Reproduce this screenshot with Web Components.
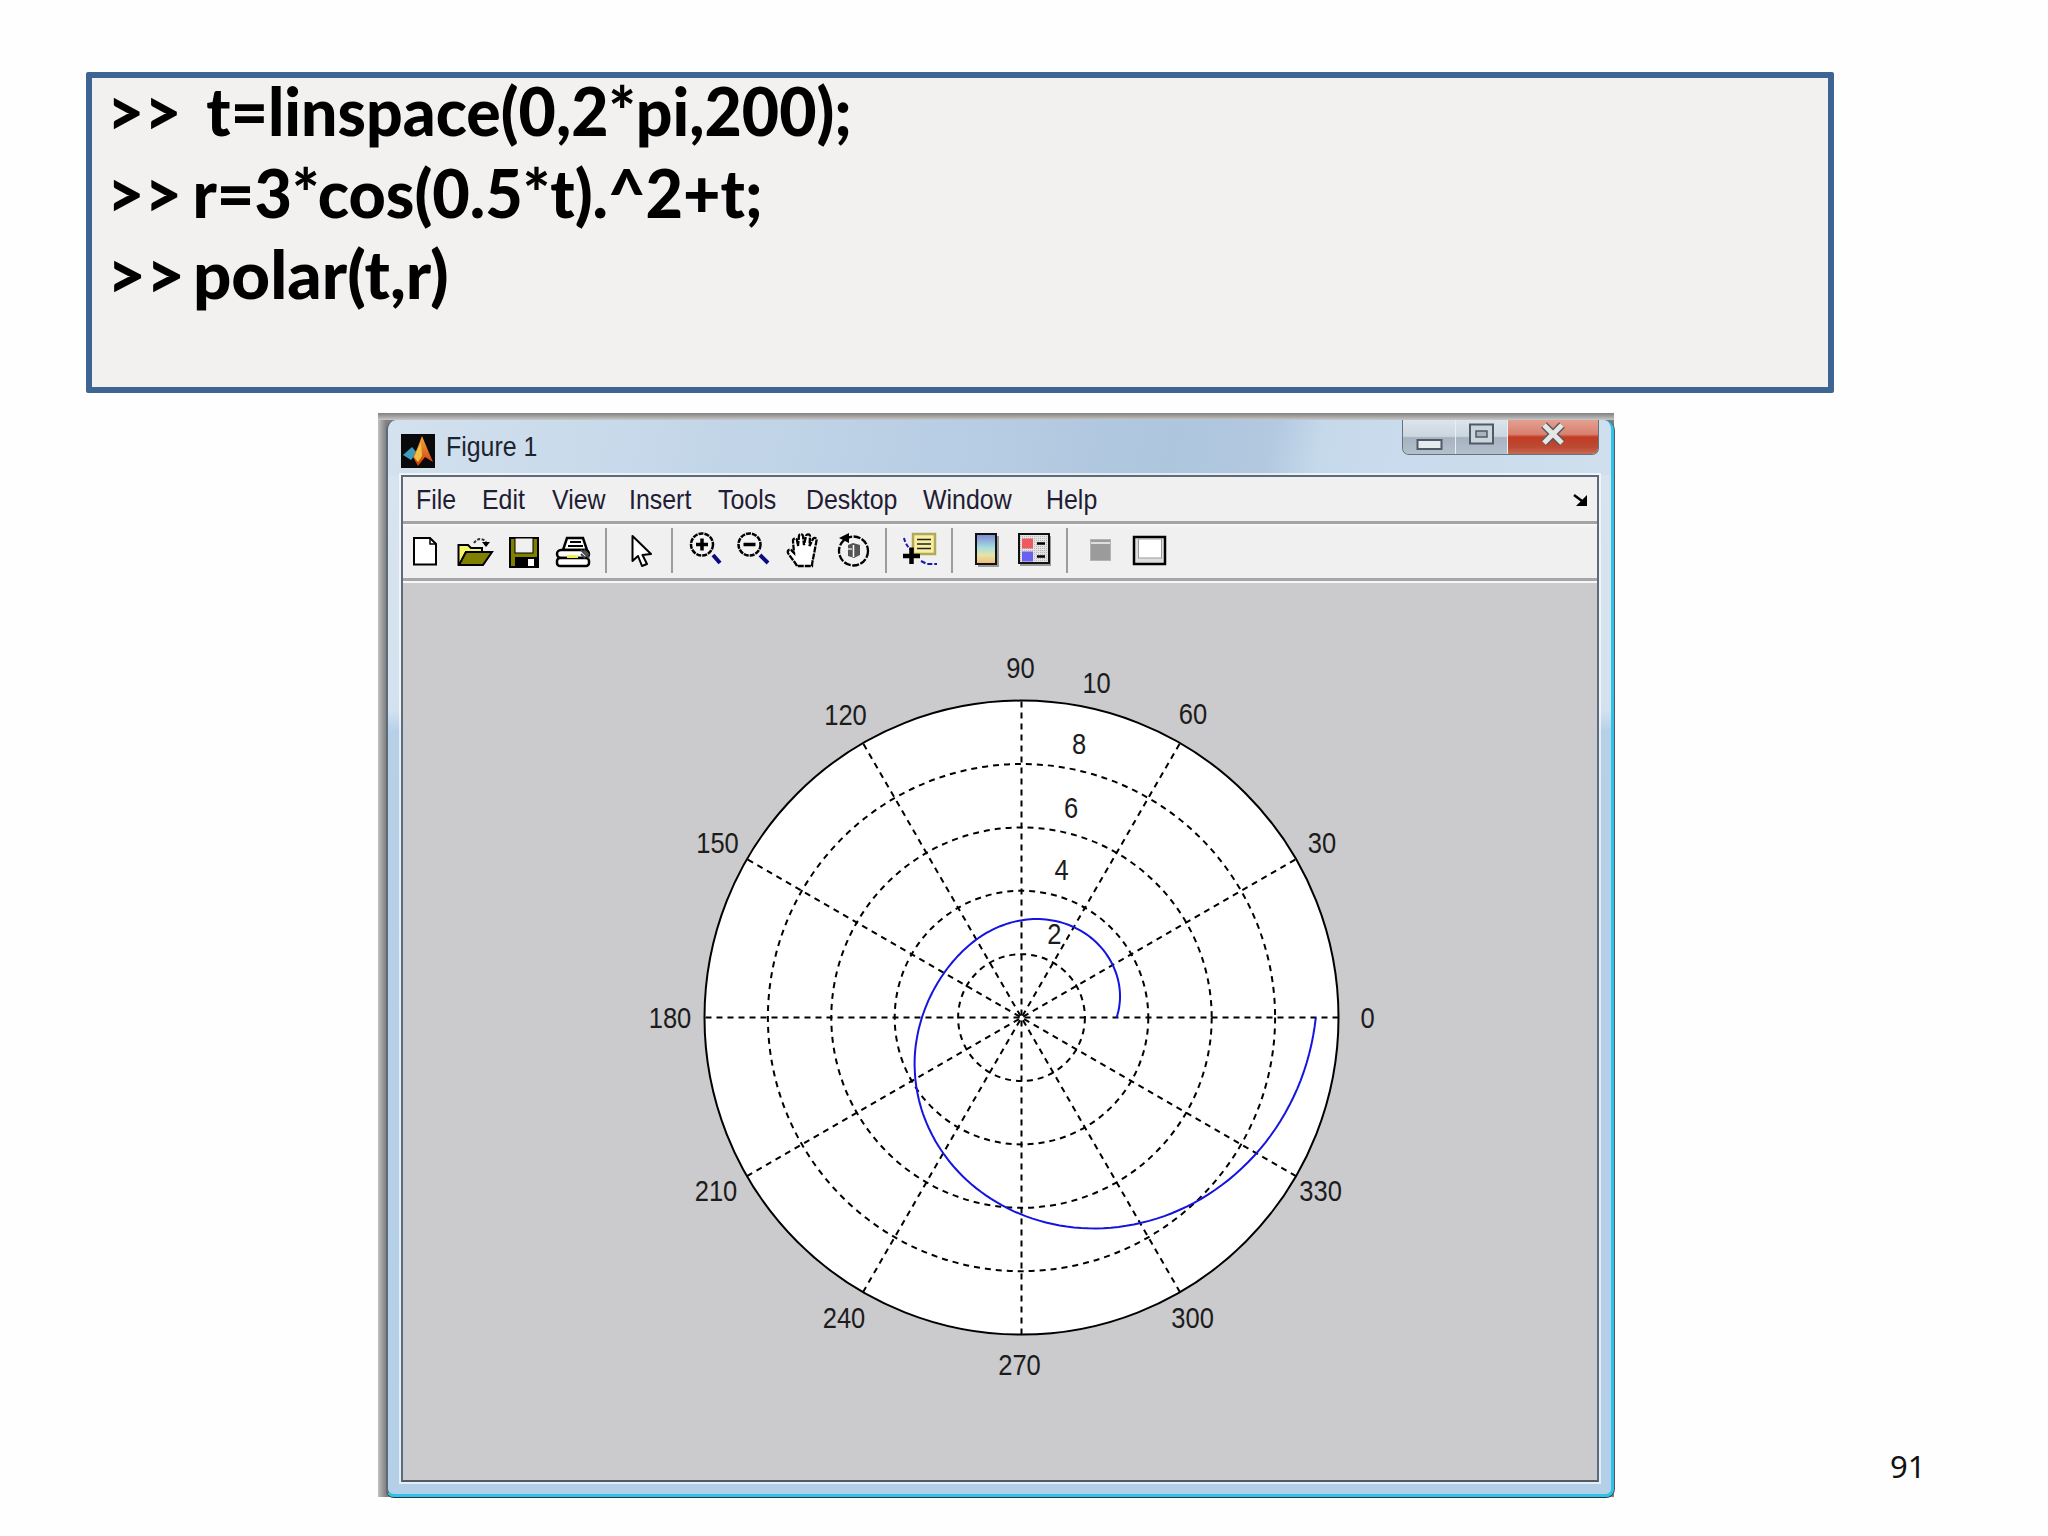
<!DOCTYPE html>
<html><head><meta charset="utf-8"><title>polar</title>
<style>html,body{margin:0;background:#fefefe}</style></head>
<body>
<slide-page>
  <cmd-box>
    <cmd-line sx="0.975">&gt;&gt;  t=linspace(0,2*pi,200);</cmd-line>
    <cmd-line sx="0.98" style="word-spacing:-5px">&gt;&gt; r=3*cos(0.5*t).^2+t;</cmd-line>
    <cmd-line sx="1.02" style="word-spacing:-8px">&gt;&gt; polar(t,r)</cmd-line>
  </cmd-box>
  <bottom-row>
    <fig-window name="Figure 1"></fig-window>
    <page-num>91</page-num>
  </bottom-row>
</slide-page>
<script>
function make(name, css, html, setup){
  customElements.define(name, class extends HTMLElement{
    constructor(){super();const s=this.attachShadow({mode:'open'});
      s.innerHTML='<style>'+css+'</style>'+(typeof html==='function'?html(this):html);}
    connectedCallback(){ if(setup&&!this._d){this._d=1;setup(this);} }
  });
}
make('slide-page',`:host{display:block;width:2048px;height:1536px;box-sizing:border-box;padding:72px 0 0 86px;background:#fefefe;overflow:hidden}`,
 `<slot></slot>`);
make('bottom-row',`:host{display:flex;margin-left:292px}`,`<slot></slot>`);
make('cmd-box',`:host{display:block;box-sizing:border-box;width:1748px;height:321px;border:6px solid #3e6494;border-radius:2px;background:#f2f1ef;padding:0 0 0 15px;margin-bottom:20px;font:900 66px/81.5px Lato,"Liberation Sans",sans-serif;color:#000;word-spacing:-3px}`,
 `<slot></slot>`);
make('cmd-line',`:host{display:block;height:81.5px;white-space:pre;margin-top:-8px;margin-bottom:8px}
 span{display:inline-block;transform-origin:0 50%}`,
 `<span><slot></slot></span>`, el=>{el.shadowRoot.querySelector('span').style.transform='scaleX('+el.getAttribute('sx')+')';});
make('page-num',`:host{display:block;align-self:flex-end;margin:0 0 16px 276px;font:400 31px/30px "Noto Sans",sans-serif;color:#111}`,`<slot></slot>`);

make('fig-window',`:host{display:block;flex:none;box-sizing:border-box;width:1236px;height:1084px;padding:7px 0 0 8px;background:linear-gradient(#808080,#c8c8c8 7px) no-repeat 0 0/100% 7px,linear-gradient(90deg,#c0c0c0,#808080 8px)}
 .frame{box-sizing:border-box;height:100%;display:flex;flex-direction:column;border-left:2px solid #5c6b7a;border-right:3px solid #2cc4ea;border-bottom:3px solid #2cc4ea;border-radius:10px 10px 8px 8px;padding:0 12px 12px 13px;background:linear-gradient(#d8e4ef,#d4e2ef 27%,#b6d0e8 29%,#b4cfe8);box-shadow:0 1px 0 #333,1px 0 0 #556}
 .title{flex:none;height:55px;margin:0 -12px 0 -13px;padding:0 13px;display:flex;align-items:center;gap:11px;border-radius:10px 10px 0 0;background:linear-gradient(100deg,#d4e1ee 0,#cadbeb 14%,#bfd3e7 34%,#b4cbe2 52%,#adc5dd 64%,#b2c9e0 72%,#c6d9eb 76%,#cfdfee 100%);font:400 28px/30px "Liberation Sans",sans-serif;color:#1c2430}
 .title svg{flex:none;margin-top:6px}
 .title span{margin-top:-1px;width:91px;display:inline-block;white-space:pre;transform:scaleX(.89);transform-origin:0 50%}
 win-controls{margin-left:auto;align-self:flex-start;margin-right:-1px}
 .panel{flex:1;min-height:0;display:flex;flex-direction:column;border:2px solid #5d6a78;border-bottom-color:#505c6a;box-shadow:0 0 0 2px rgba(255,255,255,.65);background:#cbcacc}`,
 t=>`<div class="frame"><div class="title">
   <svg width="34" height="34" viewBox="0 0 34 34"><defs><linearGradient id="m" x1="0" y1="0" x2="0" y2="1"><stop offset="0" stop-color="#f6a83a"/><stop offset="1" stop-color="#cf3a10"/></linearGradient></defs><rect width="34" height="34" fill="#0a0a0a"/><path d="M2 21 11 13 16 19 10 26Z" fill="#3d9cc0"/><path d="M21 2 26 14 32 28 24 23 17 32 12 23 16 15Z" fill="url(#m)"/><path d="M16 16 20 8 21 22 17 28 13 23Z" fill="#f0c040"/></svg>
   <span>${t.getAttribute('name')}</span><win-controls></win-controls></div>
   <div class="panel"><fig-menu></fig-menu><fig-toolbar></fig-toolbar><polar-plot></polar-plot></div></div>`);

make('win-controls',`:host{display:flex;flex:none;width:197px;height:35px;box-sizing:border-box;border:1.5px solid #66727e;border-top:0;border-radius:0 0 7px 7px;overflow:hidden}
 div{display:flex;align-items:center;justify-content:center;box-sizing:border-box;flex:none}
 .mn,.mx{background:linear-gradient(#dce4ec,#ccd6e0 48%,#a6b2bf 52%,#b4c0cc);border-right:1.5px solid #e8eef4}
 .mn{width:53px}.mx{width:52px}
 .cl{flex:1;background:linear-gradient(#e4a090,#d88070 42%,#c23c22 50%,#bc4a34 80%,#c86a54)}`,
 `<div class="mn"><svg width="27" height="14" viewBox="0 0 27 14" style="margin-top:15px"><rect x="1.5" y="2" width="24" height="9" fill="#e6ebf0" stroke="#4e5a66" stroke-width="2"/></svg></div>
  <div class="mx"><svg width="27" height="22" viewBox="0 0 27 22" style="margin-top:-6px"><rect x="2" y="1.5" width="23" height="19" fill="#ccd4dc" stroke="#4e5a66" stroke-width="2"/><rect x="8" y="8" width="11" height="6" fill="#aab4be" stroke="#4e5a66" stroke-width="1.5"/></svg></div>
  <div class="cl"><svg width="30" height="24" viewBox="0 0 30 24" style="margin-top:-6px"><path d="M6 3 24 21M24 3 6 21" stroke="#5a5a5a" stroke-width="8"/><path d="M6 3 24 21M24 3 6 21" stroke="#e6e6e6" stroke-width="5"/></svg></div>`);

make('fig-menu',`:host{flex:none;display:flex;align-items:center;box-sizing:border-box;height:47px;padding:2px 10px 0 13px;background:#f0f0f0;border-bottom:3px solid #a4a4a4}
 svg{margin-left:auto}`,
 `<menu-item style="width:66px">File</menu-item><menu-item style="width:70px">Edit</menu-item><menu-item style="width:77px">View</menu-item><menu-item style="width:89px">Insert</menu-item><menu-item style="width:88px">Tools</menu-item><menu-item style="width:117px">Desktop</menu-item><menu-item style="width:123px">Window</menu-item><menu-item style="width:60px">Help</menu-item>
 <svg width="14" height="12" viewBox="0 0 14 12"><path d="M14 1V12H3Z" fill="#000"/><path d="M1 1 9 7" stroke="#000" stroke-width="2.500"/></svg>`);
make('menu-item',`:host{display:block;flex:none;font:400 28px/30px "Liberation Sans",sans-serif;color:#221c34}
 span{display:inline-block;transform:scaleX(.89);transform-origin:0 50%}`,`<span><slot></slot></span>`);

const ICONS={
 new:`<path d="M9 8H25L31 14V34.500H9Z" fill="#fff" stroke="#000" stroke-width="2"/><path d="M25 8V14H31" fill="none" stroke="#000" stroke-width="1.500"/>`,
 open:`<path d="M3.500 15H13L16 18H27V22H11L5 34H3.500Z" fill="#f6f66a" stroke="#000" stroke-width="2"/><path d="M4 35 11 22H37L28 35Z" fill="#808000" stroke="#000" stroke-width="2"/><path d="M19 13C22 8 28 8 31 12" fill="none" stroke="#333" stroke-width="2" stroke-dasharray="3 1.500"/><path d="M27 12H35L31 17Z" fill="#000"/>`,
 save:`<rect x="6" y="8" width="28" height="29" fill="#808000" stroke="#000" stroke-width="2"/><rect x="11" y="8" width="18" height="15" fill="#f0f0f0" stroke="#000" stroke-width="1"/><rect x="11" y="27" width="23" height="10" fill="#000"/><rect x="24" y="29" width="6" height="7" fill="#fff"/>`,
 print:`<path d="M14 8H30L34 20H10Z" fill="#fff" stroke="#000" stroke-width="2.500"/><path d="M17 12H28M15 16H30" stroke="#000" stroke-width="1.800"/><rect x="4" y="20" width="32" height="8" rx="4" fill="#fff" stroke="#000" stroke-width="2.500"/><rect x="4" y="28" width="32" height="8" rx="3" fill="#fff" stroke="#000" stroke-width="2.500"/><rect x="14" y="25" width="11" height="3" fill="#f4f050"/><path d="M28 20 36 28M31 20 36 25M28 24 32 28" stroke="#444" stroke-width="1.800"/>`,
 arrow:`<path d="M10.500 6V31L16 26 20 36 25 34 20.500 25 29 24Z" fill="#fff" stroke="#000" stroke-width="2" stroke-linejoin="round"/>`,
 zoomin:`<path d="M28 25 35 33" stroke="#0b0b80" stroke-width="4"/><circle cx="17" cy="14.500" r="11" fill="#f4f4f4" stroke="#000" stroke-width="2.500" stroke-dasharray="5 1"/><path d="M11 14.500H23M17 8.500V20.500" stroke="#000" stroke-width="3.500"/>`,
 zoomout:`<path d="M27 25 35 33" stroke="#0b0b80" stroke-width="4"/><circle cx="16.500" cy="14.500" r="11" fill="#f4f4f4" stroke="#000" stroke-width="2.500" stroke-dasharray="5 1"/><path d="M10.500 14.500H22.500" stroke="#000" stroke-width="3.500"/>`,
 hand:`<path d="M14 36C12 32 8 28 5 23 4 21 6 19 8 20L11 23 10 11C10 8 13 8 14 10L15 16 16 6C16 3.500 19.500 3.500 20 6L21 15 23 6C23.500 3.500 27 4 27 6.500L26.500 16 30 9C31 7 34 8 33.500 10.500L31 24C30 29 29 33 29 36Z" fill="#fff" stroke="#000" stroke-width="2.300" stroke-dasharray="6 1"/>`,
 rotate:`<circle cx="20.500" cy="21" r="14.500" fill="#f2f2f2" stroke="#000" stroke-width="2.300" stroke-dasharray="7 1.500"/><path d="M6 8 16 3V13Z" fill="#000"/><path d="M15 15 20 13 27 15V25L21 28 15 26Z" fill="#555"/><path d="M20.500 15V27" stroke="#fff" stroke-width="1.500"/><path d="M15 19H19" stroke="#ddd" stroke-width="1.500"/>`,
 insert:`<path d="M5 8C6 13 9 17 12 20" fill="none" stroke="#1818b0" stroke-width="2" stroke-dasharray="4 2"/><path d="M22 31 28 34H38" fill="none" stroke="#1818b0" stroke-width="2" stroke-dasharray="5 2"/><rect x="14" y="4" width="22" height="20" fill="#f6f0a0" stroke="#b0a85a" stroke-width="2.500"/><path d="M18 9.500H32M18 14H32M18 18.500H32" stroke="#222" stroke-width="1.700"/><path d="M4 26H21M12.500 17.500V34" stroke="#000" stroke-width="4.500"/>`,
 colorbar:`<defs><linearGradient id="cb" x1="0" y1="0" x2="0" y2="1"><stop offset="0" stop-color="#7e86d2"/><stop offset=".45" stop-color="#a6dce0"/><stop offset=".7" stop-color="#e6e4a8"/><stop offset="1" stop-color="#f0b878"/></linearGradient></defs><rect x="12" y="6" width="21" height="31" fill="#999"/><rect x="10" y="4" width="20" height="30" fill="url(#cb)" stroke="#111" stroke-width="2"/>`,
 legend:`<defs><pattern id="dz" width="2" height="2" patternUnits="userSpaceOnUse"><rect width="2" height="2" fill="#e4e4e4"/><rect width="1" height="1" fill="#b8b8b8"/></pattern></defs><rect x="6" y="6" width="31" height="30" fill="#999"/><rect x="5" y="4" width="30" height="29" fill="url(#dz)" stroke="#111" stroke-width="2"/><rect x="8" y="8.500" width="11" height="10" fill="#ee5a60"/><rect x="8" y="21.500" width="11" height="10" fill="#6a62ee"/><path d="M23 13.500H31M23 26.500H31" stroke="#000" stroke-width="2.500"/>`,
 grey:`<rect x="10.500" y="9.500" width="20" height="21" fill="#9b9b9b" stroke="#b4b4b4"/><rect x="11" y="12" width="19" height="2" fill="#dedede"/>`,
 frame:`<rect x="5" y="7" width="31" height="27" fill="#dedede" stroke="#000" stroke-width="2.500"/><rect x="9.500" y="9" width="23" height="19" fill="#fff" stroke="#999"/>`
};
make('tb-icon',`:host{display:block;flex:none;width:40px;height:40px}svg{display:block}`,
 t=>`<svg width="40" height="40" viewBox="0 0 40 40">${ICONS[t.getAttribute('name')]}</svg>`);
make('tb-sep',`:host{display:block;flex:none;width:2px;height:45px;margin-top:1px;background:#9c9c9c}`,``);
make('fig-toolbar',`:host{flex:none;display:flex;align-items:center;box-sizing:border-box;height:57px;background:linear-gradient(#f8f8f8,#f0f0f0 4px);border-bottom:3px solid #a6a6a6;padding-bottom:3px}`,
 (()=>{const seq=[['new',1.5],['open',10],['save',9],['print',9.5],['|',12],['arrow',15],['|',9],['zoomin',12],['zoomout',8],['hand',10],['rotate',10],['|',12],['insert',12],['|',12],['colorbar',13],['legend',8],['|',12],['grey',12],['frame',9]];
  return ()=>seq.map(([n,m])=>n==='|'?`<tb-sep style="margin-left:${m}px"></tb-sep>`:`<tb-icon name="${n}" style="margin-left:${m}px"></tb-icon>`).join('');})());

make('polar-plot',`:host{display:block;flex:1;min-height:0;background:linear-gradient(#f6f6f6,#f6f6f6 2px,#cbcacc 2px)}svg{display:block;width:1194px;height:899px}
 text{font:400 29px "Liberation Sans",sans-serif;fill:#1c1c1c;text-anchor:middle;dominant-baseline:central}`,
 ()=>{const cx=1021.5,cy=1017.6,R=317,k=R/10;
  let g='';
  for(let r=2;r<=8;r+=2)g+=`<circle cx="${cx}" cy="${cy}" r="${k*r}" fill="none" stroke="#000" stroke-width="2" stroke-dasharray="6 5"/>`;
  for(let i=1;i<=6;i++){const a=i*Math.PI/6,c=Math.cos(a)*R,s=Math.sin(a)*R;
    g+=`<line x1="${cx-c}" y1="${cy+s}" x2="${cx+c}" y2="${cy-s}" stroke="#000" stroke-width="2" stroke-dasharray="6 5"/>`;}
  let p=[];for(let i=0;i<200;i++){const t=i/199*2*Math.PI,r=3*Math.cos(.5*t)**2+t;
    p.push((cx+k*r*Math.cos(t)).toFixed(1)+','+(cy-k*r*Math.sin(t)).toFixed(1));}
  const L=[['90',1020.5,667.6],['10',1096.6,682.6],['120',845.5,715],['60',1193,714],['150',717.5,842.6],['30',1322,842.6],['180',670,1017.6],['0',1367.6,1017.6],['210',716,1190.6],['330',1320.6,1190.6],['240',844,1318],['300',1192.6,1318],['270',1019.5,1365],['8',1079,744],['6',1071,808],['4',1061.7,870],['2',1054.4,934]];
  return `<svg viewBox="403 581 1194 899"><circle cx="${cx}" cy="${cy}" r="${R}" fill="#fff" stroke="#000" stroke-width="2"/>${g}<polyline points="${p.join(' ')}" fill="none" stroke="#1414e0" stroke-width="2"/>${L.map(l=>`<text transform="translate(${l[1]} ${l[2]}) scale(.88 1)">${l[0]}</text>`).join('')}</svg>`;});
</script>
</body></html>
